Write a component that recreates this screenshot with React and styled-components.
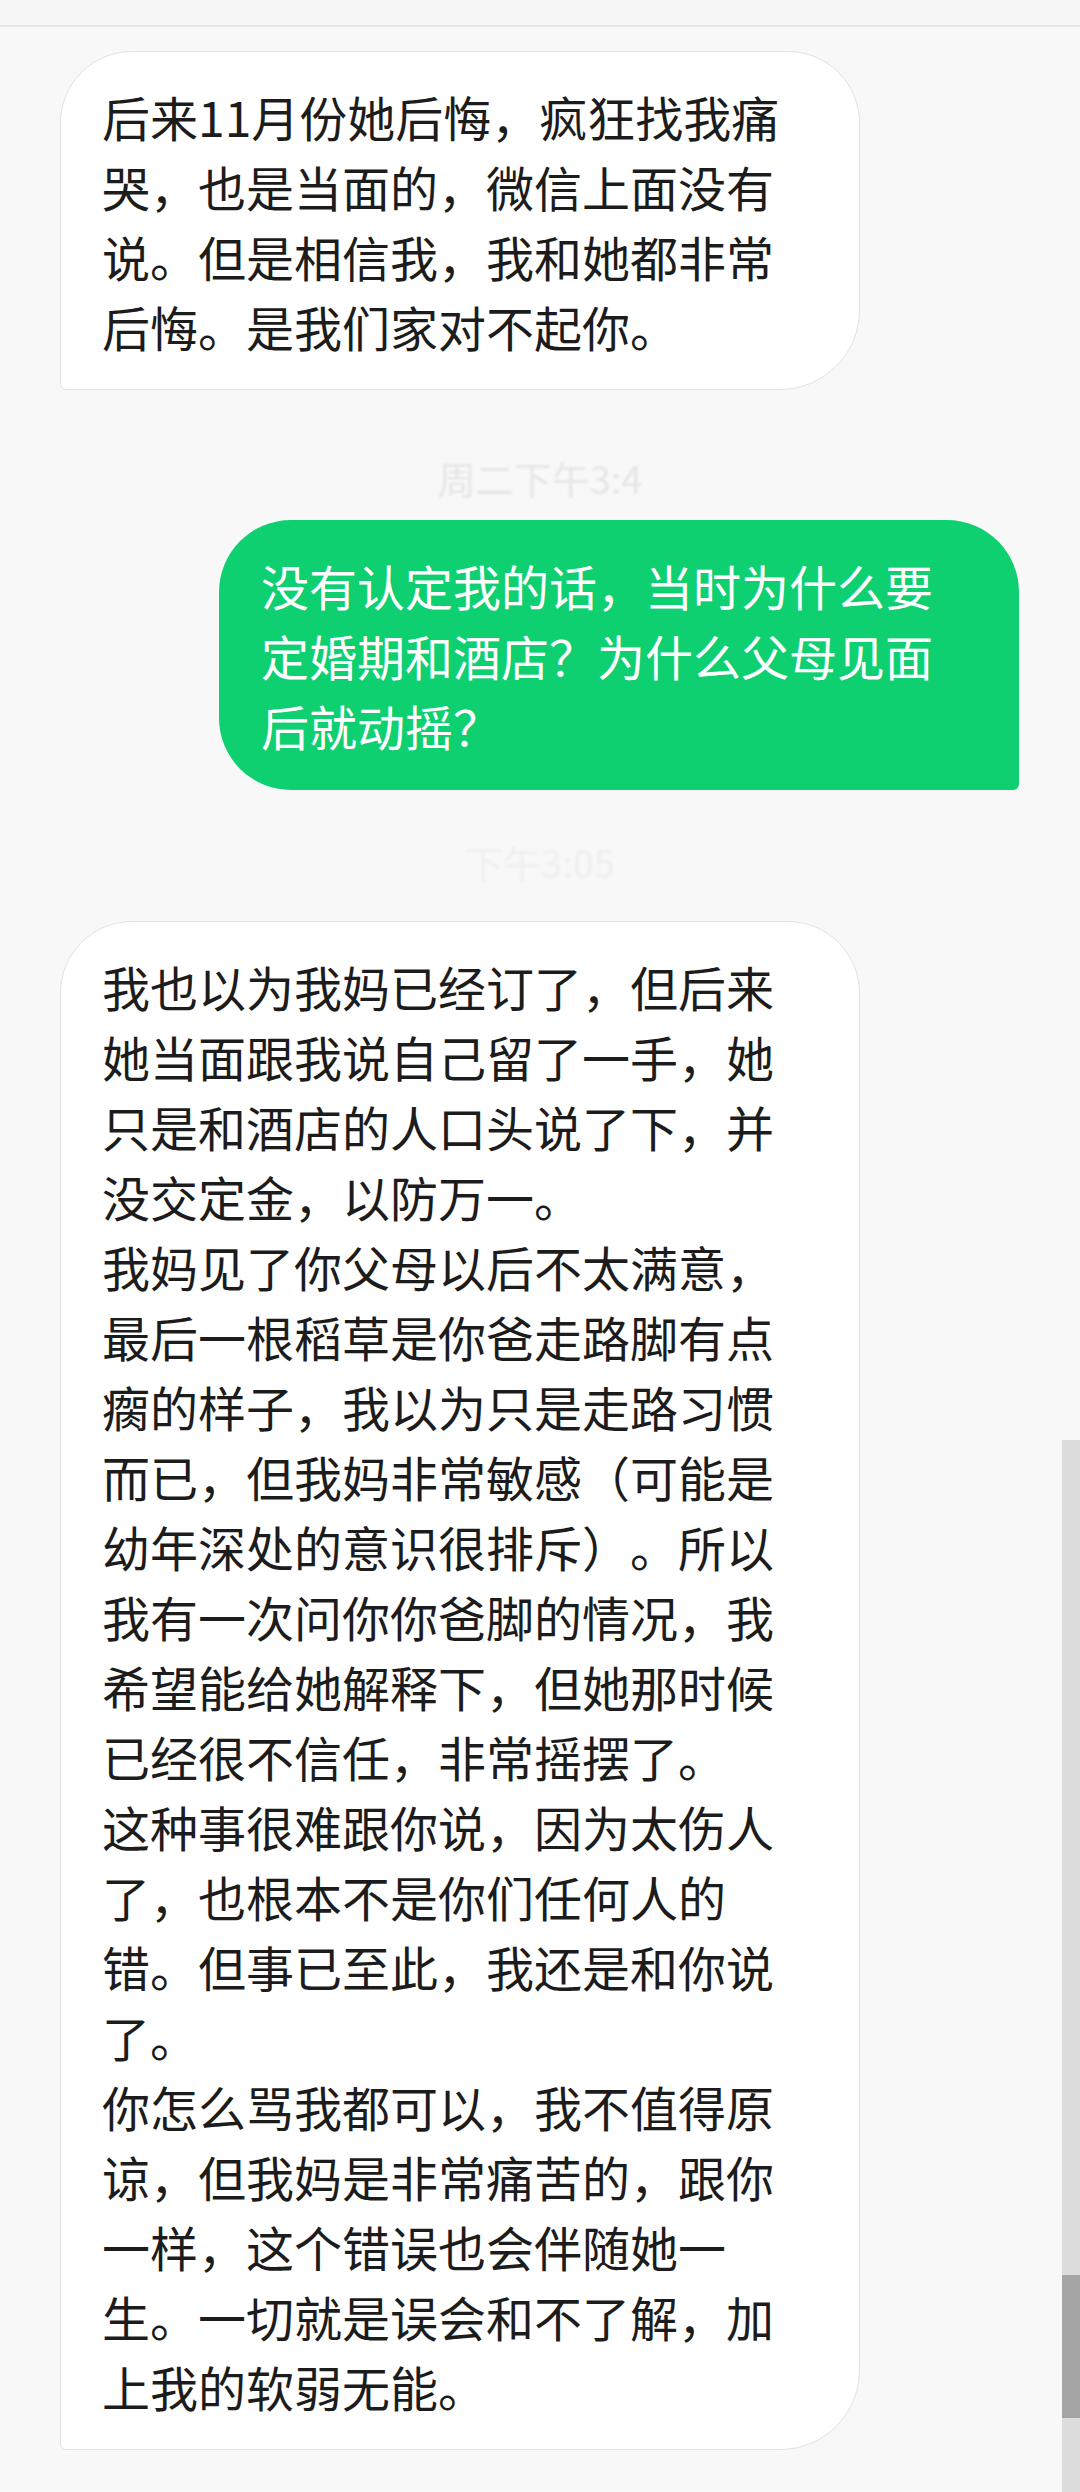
import React from "react";
import styled, { createGlobalStyle } from "styled-components";

const color = {
    page: "#f8f8f8",
    bar: "#f6f6f6",
    line: "#e4e4e4",
    text: "#1c1c1c",
    green: "#0fd071",
    border: "#e2e2e2",
    track: "#dcdcdc",
    thumb: "#a5a5a5",
};

const GlobalStyle = createGlobalStyle`
    html, body {
        margin: 0;
        padding: 0;
        background-color: ${color.page};
        font-family: "Noto Sans CJK SC", "Noto Sans", sans-serif;
    }
`;

const Screen = styled.div`
    position: relative;
    width: 1080px;
    min-height: 2492px;
    background-color: ${color.page};
    overflow: hidden;
`;

const TopBar = styled.div`
    height: 25px;
    background-color: ${color.bar};
    border-bottom: 2px solid ${color.line};
`;

const ChatList = styled.div`
    display: flex;
    flex-direction: column;
    padding-top: 24px;
`;

const Row = styled.div`
    display: flex;
    justify-content: ${(p) => (p.$mine ? "flex-end" : "flex-start")};
    padding: 0 61px 0 60px;
`;

const Bubble = styled.div`
    width: 800px;
    box-sizing: border-box;
    font-size: 48px;
    line-height: 70px;
    white-space: pre-wrap;
    line-break: strict;
    text-spacing-trim: space-all;
    ${(p) =>
        p.$mine
            ? `
        background-color: ${color.green};
        color: #ffffff;
        padding: 30px 42px;
        border-radius: 72px 72px 6px 72px;
    `
            : `
        background-color: #ffffff;
        color: ${color.text};
        border: 1px solid ${color.border};
        padding: 29px 41px 28px 41px;
        border-radius: 72px 72px 80px 6px;
    `}
`;

const Stamp = styled.div`
    display: flex;
    justify-content: center;
    height: ${(p) => p.$height}px;
    padding-top: ${(p) => p.$top}px;
    box-sizing: border-box;
`;

const StampText = styled.span`
    font-size: 38px;
    line-height: 50px;
    color: ${(p) => p.$tone};
    filter: blur(1px);
`;

const ScrollTrack = styled.div`
    position: absolute;
    right: 0;
    top: 1440px;
    bottom: 0;
    width: 18px;
    background-color: ${color.track};
`;

const ScrollThumb = styled.div`
    position: absolute;
    left: 0;
    right: 0;
    top: 835px;
    height: 143px;
    background-color: ${color.thumb};
`;

const first =
    "后来11月份她后悔，疯狂找我痛哭，也是当面的，微信上面没有说。但是相信我，我和她都非常后悔。是我们家对不起你。";

const mine =
    "没有认定我的话，当时为什么要定婚期和酒店？为什么父母见面后就动摇？";

const last = [
    "我也以为我妈已经订了，但后来她当面跟我说自己留了一手，她只是和酒店的人口头说了下，并没交定金，以防万一。",
    "我妈见了你父母以后不太满意，最后一根稻草是你爸走路脚有点瘸的样子，我以为只是走路习惯而已，但我妈非常敏感（可能是幼年深处的意识很排斥）。所以我有一次问你你爸脚的情况，我希望能给她解释下，但她那时候已经很不信任，非常摇摆了。",
    "这种事很难跟你说，因为太伤人了，也根本不是你们任何人的错。但事已至此，我还是和你说了。",
    "你怎么骂我都可以，我不值得原谅，但我妈是非常痛苦的，跟你一样，这个错误也会伴随她一生。一切就是误会和不了解，加上我的软弱无能。",
].join("\n");

const App = () => {
    return (
        <Screen>
            <GlobalStyle />
            <TopBar />
            <ChatList>
                <Row>
                    <Bubble>{first}</Bubble>
                </Row>
                <Stamp $height={130} $top={63}>
                    <StampText $tone="#e6e6e6">周二下午3:4</StampText>
                </Stamp>
                <Row $mine>
                    <Bubble $mine>{mine}</Bubble>
                </Row>
                <Stamp $height={131} $top={47}>
                    <StampText $tone="#efefef">下午3:05</StampText>
                </Stamp>
                <Row>
                    <Bubble>{last}</Bubble>
                </Row>
            </ChatList>
            <ScrollTrack>
                <ScrollThumb />
            </ScrollTrack>
        </Screen>
    );
};

export default App;
